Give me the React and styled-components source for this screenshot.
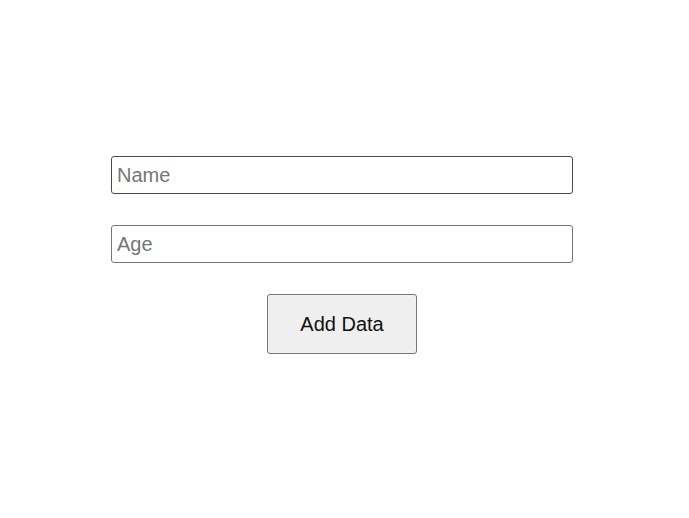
import React, { useState } from "react";
import styled, { createGlobalStyle } from "styled-components";

const GlobalStyle = createGlobalStyle`
  html, body {
    margin: 0;
    padding: 0;
    background: #ffffff;
    font-family: "Liberation Sans", Arial, sans-serif;
  }
`;

const Page = styled.div`
  width: 689px;
  height: 518px;
  box-sizing: border-box;
  padding: 156px 0 0 111px;
`;

const Form = styled.form`
  width: 462px;
  display: flex;
  flex-direction: column;
  align-items: center;
  gap: 31px;
`;

const Field = styled.input`
  width: 100%;
  height: 38px;
  box-sizing: border-box;
  padding: 0 5px;
  border: 1px solid ${(p) => (p.$active ? "#4a4a4a" : "#767676")};
  border-radius: 3px;
  font-family: "Liberation Sans", Arial, sans-serif;
  font-size: 20px;
  color: #111;
  outline: none;

  &::placeholder {
    color: #757575;
  }
`;

const Button = styled.button`
  width: 150px;
  height: 60px;
  background: #efefef;
  border: 1px solid #767676;
  border-radius: 3px;
  font-family: "Liberation Sans", Arial, sans-serif;
  font-size: 20px;
  color: #111;
  cursor: pointer;
`;

const App = () => {
  const [name, setName] = useState("");
  const [age, setAge] = useState("");

  return (
    <>
      <GlobalStyle />
      <Page>
        <Form onSubmit={(e) => e.preventDefault()}>
          <Field
            $active
            placeholder="Name"
            value={name}
            onChange={(e) => setName(e.target.value)}
          />
          <Field
            placeholder="Age"
            value={age}
            onChange={(e) => setAge(e.target.value)}
          />
          <Button type="submit">Add Data</Button>
        </Form>
      </Page>
    </>
  );
};

export default App;
